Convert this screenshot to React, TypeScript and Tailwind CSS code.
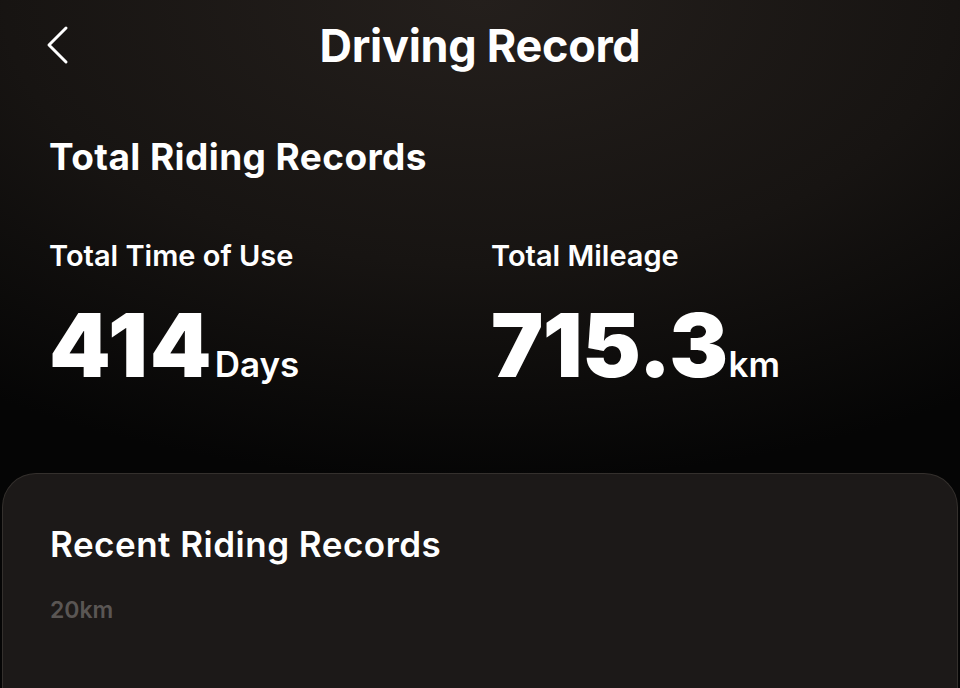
function Stat({ label, value, unit, wide }: { label: string; value: string; unit: string; wide?: boolean }) {
  return (
    <div>
      <div className="text-[29px] font-semibold leading-none text-white">{label}</div>
      <div className="mt-[31px] flex items-baseline">
        <span className={`text-[88px] font-black leading-none text-white ${wide ? 'tracking-[2px]' : 'tracking-[-0.5px]'}`}>{value}</span>
        <span className="ml-[1px] text-[35px] font-semibold leading-none text-white">{unit}</span>
      </div>
    </div>
  )
}

export default function App() {
  return (
    <div
      className="flex h-[688px] w-[960px] flex-col overflow-hidden bg-[radial-gradient(ellipse_90%_70%_at_50%_0%,#241f1c_0%,#171412_55%,#050505_100%)] text-white"
      style={{ fontFamily: 'Inter, "Noto Sans", sans-serif' }}
    >
      {/* header */}
      <div className="relative flex h-[90px] items-center justify-center">
        <button className="absolute left-[36px] top-[22px] text-white">
          <svg width="44" height="46" viewBox="0 0 44 46" fill="none">
            <polyline points="30,6 13,23 30,40" stroke="currentColor" strokeWidth="3" strokeLinecap="round" strokeLinejoin="round" />
          </svg>
        </button>
        <h1 className="text-[45px] font-bold leading-none tracking-[-0.3px]">Driving Record</h1>
      </div>

      <div className="px-[49px] pt-[48px]">
        <h2 className="text-[37px] font-bold leading-none tracking-[0.4px]">Total Riding Records</h2>
        <div className="mt-[66px] grid grid-cols-[442px_1fr]">
          <Stat label="Total Time of Use" value="414" unit="Days" wide />
          <Stat label="Total Mileage" value="715.3" unit="km" />
        </div>
      </div>

      {/* recent card */}
      <div className="mx-[2px] mt-[84px] flex-1 rounded-t-[34px] border border-b-0 border-[#34302d] bg-[#1c1918] px-[47px] pt-[53px]">
        <h3 className="text-[35px] font-semibold leading-none tracking-[0.5px]">Recent Riding Records</h3>
        <div className="mt-[37px] text-[23px] font-semibold leading-none text-[#5a5654]">20km</div>
      </div>
    </div>
  )
}
